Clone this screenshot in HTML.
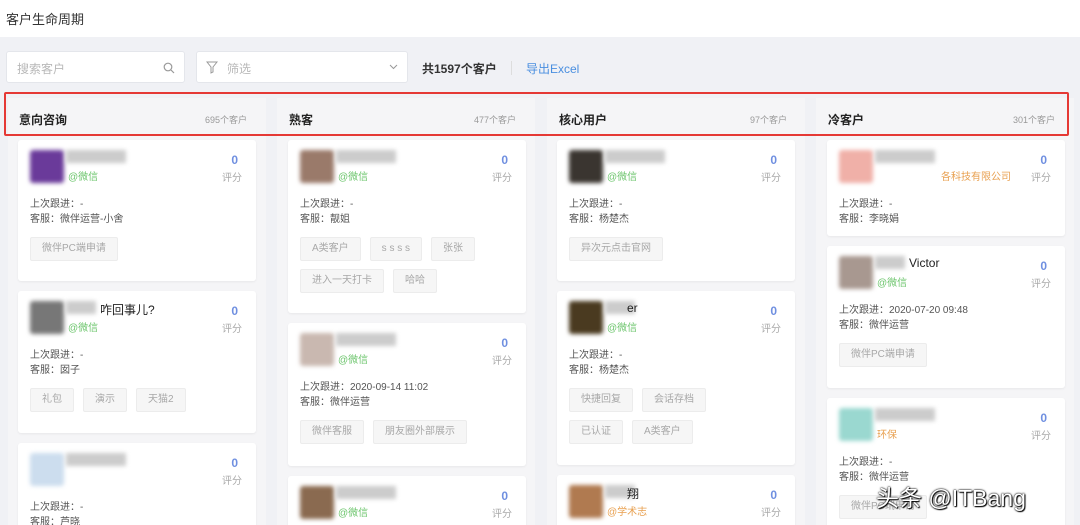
<!DOCTYPE html>
<html><head><meta charset="utf-8">
<style>
*{margin:0;padding:0;box-sizing:border-box}
html,body{width:1080px;height:525px;overflow:hidden}
body{background:#f0f1f5;font-family:"Liberation Sans","Noto Sans CJK SC",sans-serif;position:relative;color:#333}
.a{position:absolute}
.top{left:0;top:0;width:1080px;height:37px;background:#fff;font-size:13px;color:#333;padding:9px 0 0 6px}
.box{background:#fff;border:1px solid #e4e6eb;border-radius:3px;height:32px;top:51px}
.ph{font-size:12px;color:#b8b8b8}
.col{background:#f5f5f7;width:258px;top:98px;height:427px}
.colh{font-size:12px;font-weight:bold;color:#222}
.cnt{font-size:9px;color:#999}
.card{background:#fff;border-radius:3px;box-shadow:0 1px 2px rgba(0,0,0,.06);width:238px;overflow:hidden}
.av{left:12px;top:10px;width:34px;height:33px;border-radius:3px}
.nm{left:50px;top:10px;font-size:12px;color:#222}
.src{left:50px;top:28px;font-size:10px}
.sc{right:18px;top:13px;font-size:12px;color:#6f8fe0;font-weight:bold}
.pf{right:14px;top:29px;font-size:10px;color:#aaa}
.ln{left:12px;font-size:10px;color:#555}
.row{position:absolute;left:12px;display:flex;gap:9px}
.tag{height:24px;line-height:22px;border:1px solid #ececec;background:#f6f6f6;color:#a8a8a8;font-size:10px;padding:0 11px;border-radius:2px;white-space:nowrap}
.blur{filter:blur(2px)}
</style></head><body>
<div class="a top">客户生命周期</div>
<div class="a box" style="left:6px;width:179px"><span class="a ph" style="left:10px;top:8px">搜索客户</span>
<svg class="a" style="left:156px;top:10px" width="12" height="12" viewBox="0 0 12 12"><circle cx="5" cy="5" r="3.8" fill="none" stroke="#999" stroke-width="1.2"/><path d="M8 8l3 3" stroke="#999" stroke-width="1.2"/></svg></div>
<div class="a box" style="left:196px;width:212px">
<svg class="a" style="left:9px;top:9px" width="12" height="13" viewBox="0 0 12 13"><path d="M1 1h10L7 6v5L5 12V6z" fill="none" stroke="#999" stroke-width="1"/></svg>
<span class="a ph" style="left:30px;top:8px">筛选</span>
<svg class="a" style="left:192px;top:12px" width="9" height="6" viewBox="0 0 9 6"><path d="M1 1l3.5 3.5L8 1" fill="none" stroke="#999"/></svg></div>
<div class="a" style="left:422px;top:60px;font-size:12px;font-weight:bold;color:#333">共1597个客户</div>
<div class="a" style="left:511px;top:61px;width:1px;height:14px;background:#ddd"></div>
<div class="a" style="left:526px;top:60px;font-size:12px;color:#4a8fe0">导出Excel</div>

<div class="a col" style="left:8px"></div>
<div class="a col" style="left:277px"></div>
<div class="a col" style="left:547px"></div>
<div class="a col" style="left:816px"></div>
<div class="a colh" style="left:19px;top:111px">意向咨询</div><div class="a cnt" style="left:205px;top:113px">695个客户</div>
<div class="a colh" style="left:289px;top:111px">熟客</div><div class="a cnt" style="left:474px;top:113px">477个客户</div>
<div class="a colh" style="left:559px;top:111px">核心用户</div><div class="a cnt" style="left:750px;top:113px">97个客户</div>
<div class="a colh" style="left:828px;top:111px">冷客户</div><div class="a cnt" style="left:1013px;top:113px">301个客户</div>
<div id="cards"></div>
<div class="a" style="left:4px;top:92px;width:1065px;height:44px;border:2px solid #e53935;border-radius:2px"></div>
<div class="a" style="left:876px;top:479px;font-size:23px;color:#fff;text-shadow:0 0 2px #000,0 0 1px #000,1px 1px 1px #000">头条 @ITBang</div>
<script>
var G='#6cc56c',O='#e8a050';
var C=[
[18,140,141,'#6a3a9a','','@微信',G,'-','微伴运营-小舍',[['微伴PC端申请']]],
[18,291,142,'#777','咋回事儿?','@微信',G,'-','囡子',[['礼包','演示','天猫2']]],
[18,443,90,'#cde','','',G,'-','芦晓',[]],
[288,140,173,'#9a7a6a','','@微信',G,'-','靓姐',[['A类客户','s s s s','张张'],['进入一天打卡','哈哈']]],
[288,323,143,'#c9b8b0','','@微信',G,'2020-09-14 11:02','微伴运营',[['微伴客服','朋友圈外部展示']]],
[288,476,60,'#8a6a50','','@微信',G,'','',[]],
[557,140,141,'#3a3530','','@微信',G,'-','杨楚杰',[['异次元点击官网']]],
[557,291,174,'#4a3a20','er','@微信',G,'-','杨楚杰',[['快捷回复','会话存档'],['已认证','A类客户']]],
[557,475,60,'#b07a50','翔','@学术志',O,'','',[]],
[827,140,96,'#f0b0a8','','各科技有限公司',O,'-','李晓娟',[]],
[827,246,142,'#a89890','Victor','@微信',G,'2020-07-20 09:48','微伴运营',[['微伴PC端申请']]],
[827,398,130,'#9ad8d0','','环保',O,'-','微伴运营',[['微伴PC端申请']]]
];
var h='';
C.forEach(function(c){
 var s='<div class="a card" style="left:'+c[0]+'px;top:'+c[1]+'px;height:'+c[2]+'px">';
 s+='<div class="a av blur" style="background:'+c[3]+'"></div>';
 s+='<div class="a blur" style="left:48px;top:10px;width:'+(c[4]?30:60)+'px;height:13px;background:#ccc"></div>';
 if(c[4])s+='<div class="a nm" style="left:'+(c[4].length>3?82:70)+'px">'+c[4]+'</div>';
 if(c[5])s+='<div class="a src" style="left:'+(c[5].length>4?114:50)+'px;color:'+c[6]+'">'+c[5]+'</div>';
 s+='<div class="a sc">0</div><div class="a pf">评分</div>';
 if(c[7])s+='<div class="a ln" style="top:55px">上次跟进：'+c[7]+'</div><div class="a ln" style="top:70px">客服：'+c[8]+'</div>';
 var y=97;
 c[9].forEach(function(r){s+='<div class="row" style="top:'+y+'px">';r.forEach(function(t){s+='<div class="tag">'+t+'</div>';});s+='</div>';y+=32;});
 s+='</div>';h+=s;
});
document.getElementById('cards').innerHTML=h;
</script>
</body></html>
